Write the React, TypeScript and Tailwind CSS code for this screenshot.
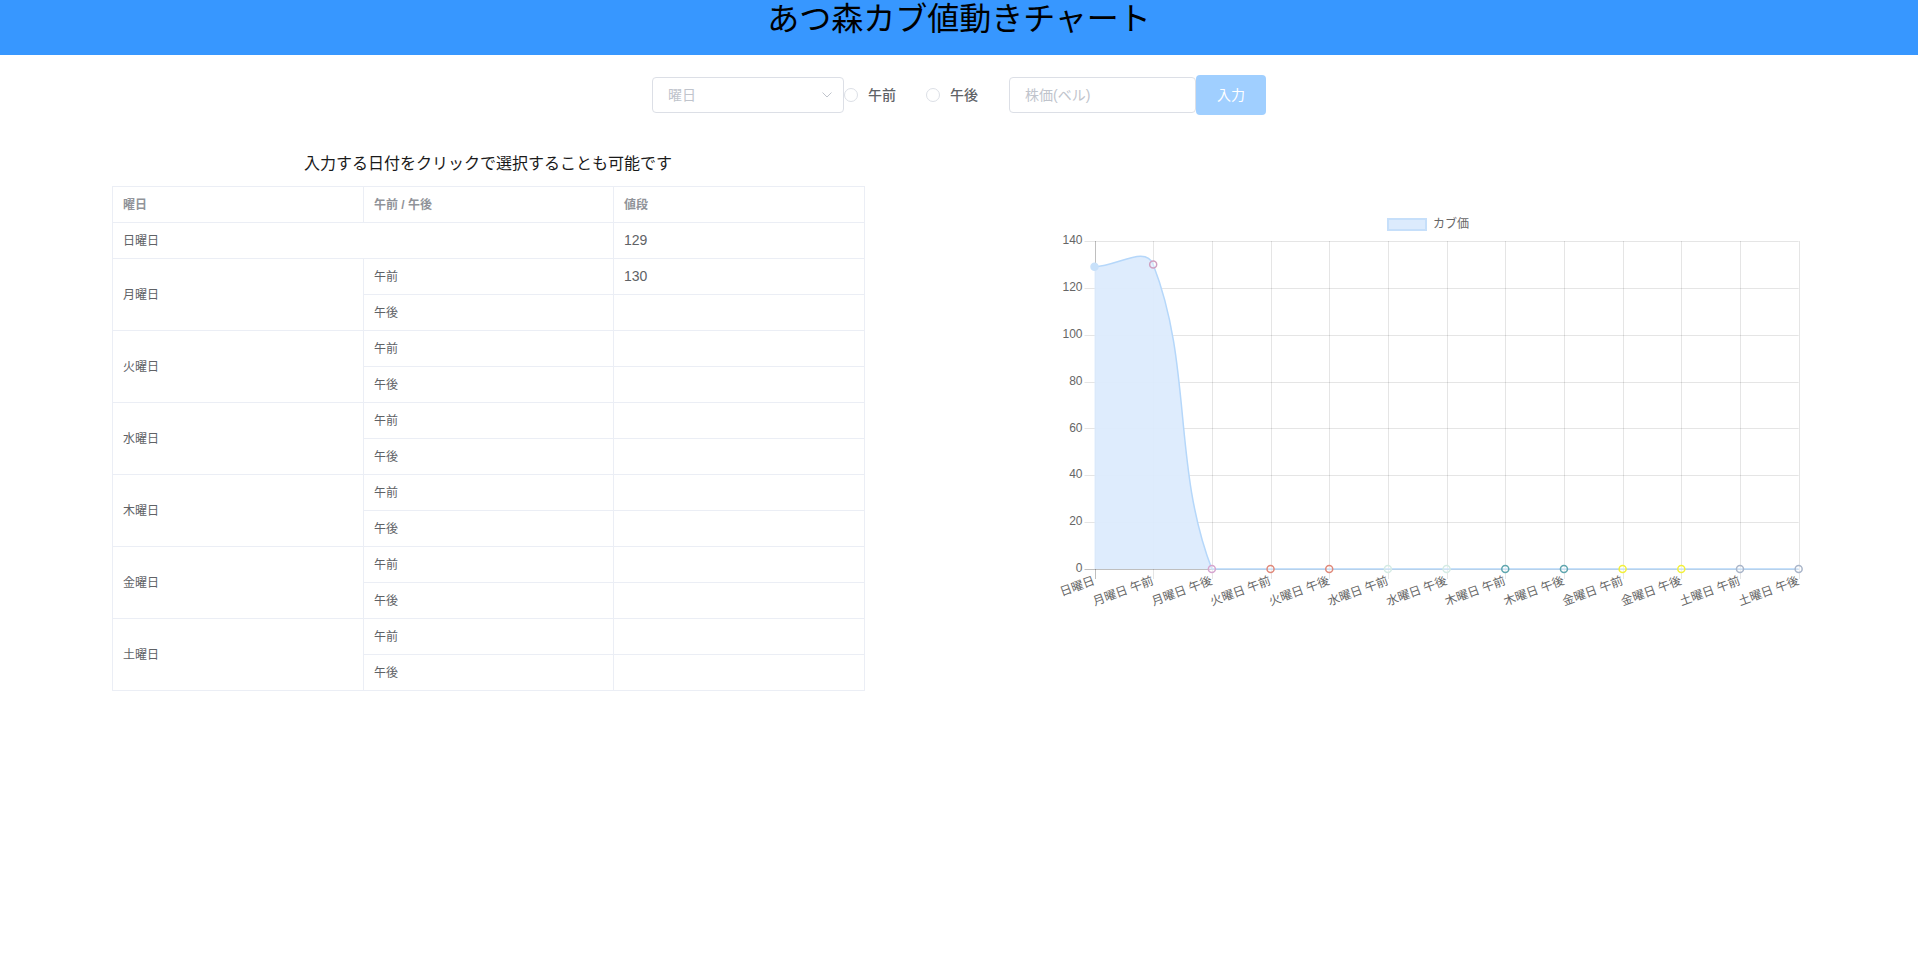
import React from "react";

const days = ["月曜日", "火曜日", "水曜日", "木曜日", "金曜日", "土曜日"];
const prices: Record<string, string> = { "月曜日-午前": "130" };

const labels = ["日曜日", ...days.flatMap((d) => [`${d} 午前`, `${d} 午後`])];
const values = [129, 130, 0, 0, 0, 0, 0, 0, 0, 0, 0, 0, 0];
const pointColors = [
  "#c8e1fa",
  "#cf9fc0",
  "#d6a5cf",
  "#e0897a",
  "#e0897a",
  "#d5ebe4",
  "#d5ebe4",
  "#5fa6ae",
  "#5fa6ae",
  "#f2f03c",
  "#f2f03c",
  "#a9b5c9",
  "#a9b5c9",
];

// chart area, in svg coords (svg sits at page x 1040, y 210)
const X0 = 54.5;
const DX = 58.68;
const YTOP = 31;
const YBOT = 359;
const px = (i: number) => X0 + i * DX;
const py = (v: number) => YBOT - (v / 140) * (YBOT - YTOP);

type Pt = { x: number; y: number };

// same spline as chart.js (tension 0.4)
function controlPoints(prev: Pt, cur: Pt, next: Pt, t: number) {
  const d01 = Math.hypot(cur.x - prev.x, cur.y - prev.y);
  const d12 = Math.hypot(next.x - cur.x, next.y - cur.y);
  let s01 = d01 / (d01 + d12);
  let s12 = d12 / (d01 + d12);
  s01 = isNaN(s01) ? 0 : s01;
  s12 = isNaN(s12) ? 0 : s12;
  const fa = t * s01;
  const fb = t * s12;
  return {
    prev: { x: cur.x - fa * (next.x - prev.x), y: cur.y - fa * (next.y - prev.y) },
    next: { x: cur.x + fb * (next.x - prev.x), y: cur.y + fb * (next.y - prev.y) },
  };
}

function buildPath() {
  const pts = values.map((v, i) => ({ x: px(i), y: py(v) }));
  const cps = pts.map((p, i) =>
    controlPoints(pts[i - 1] ?? p, p, pts[i + 1] ?? p, 0.4)
  );
  const clamp = (y: number) => Math.min(YBOT, Math.max(YTOP, y));
  let d = `M${pts[0].x},${pts[0].y}`;
  for (let i = 1; i < pts.length; i++) {
    const a = cps[i - 1].next;
    const b = cps[i].prev;
    d += ` C${a.x},${clamp(a.y)} ${b.x},${clamp(b.y)} ${pts[i].x},${pts[i].y}`;
  }
  const line = d;
  const area = `${d} L${pts[pts.length - 1].x},${YBOT} L${pts[0].x},${YBOT} Z`;
  return { line, area, pts };
}

const KabuChart: React.FC = () => {
  const { line, area, pts } = buildPath();
  const yTicks = [0, 20, 40, 60, 80, 100, 120, 140];
  const right = px(12);

  return (
    <svg width="780" height="410" className="block font-['Liberation_Sans','Noto_Sans_CJK_JP',sans-serif]">
      {/* legend */}
      <rect x="348" y="9" width="38" height="11" fill="#dcebfd" stroke="#c6dffa" strokeWidth="2" />
      <text x="393" y="15" fontSize="12" fill="#666" dominantBaseline="middle">
        カブ価
      </text>

      {/* horizontal grid */}
      {yTicks.map((t) => (
        <g key={t}>
          <line
            x1={X0 - 10}
            x2={right}
            y1={Math.round(py(t)) + 0.5}
            y2={Math.round(py(t)) + 0.5}
            stroke={t === 0 ? "rgba(0,0,0,0.25)" : "rgba(0,0,0,0.1)"}
            strokeWidth="1"
          />
          <text
            x={X0 - 12}
            y={py(t)}
            fontSize="12"
            fill="#666"
            textAnchor="end"
            dominantBaseline="middle"
          >
            {t}
          </text>
        </g>
      ))}

      {/* vertical grid + x labels */}
      {labels.map((l, i) => (
        <g key={l}>
          <line
            x1={Math.round(px(i)) + 0.5}
            x2={Math.round(px(i)) + 0.5}
            y1={YTOP}
            y2={YBOT + 10}
            stroke={i === 0 ? "rgba(0,0,0,0.25)" : "rgba(0,0,0,0.1)"}
            strokeWidth="1"
          />
          <text
            transform={`translate(${px(i)},${YBOT + 12}) rotate(-20)`}
            fontSize="12"
            fill="#666"
            textAnchor="end"
            dominantBaseline="middle"
          >
            {l}
          </text>
        </g>
      ))}

      {/* data */}
      <path d={area} fill="#dcebfd" opacity="0.95" />
      <path d={line} fill="none" stroke="#b5d7fa" strokeWidth="1.5" />
      {pts.map((p, i) => (
        <circle
          key={i}
          cx={p.x}
          cy={p.y}
          r="3.5"
          fill={i === 0 ? "#c8e1fa" : "rgba(255,255,255,0.35)"}
          stroke={pointColors[i]}
          strokeWidth="1.5"
        />
      ))}
    </svg>
  );
};

const Radio: React.FC<{ label: string; className?: string }> = ({ label, className }) => (
  <label className={`flex items-center cursor-pointer ${className ?? ""}`}>
    <span className="w-[14px] h-[14px] rounded-full border border-[#dcdfe6] bg-white" />
    <span className="pl-[10px] text-[14px] font-medium text-[#606266] leading-none">{label}</span>
  </label>
);

const cell = "border border-[#ebeef5] h-[36px] px-[10px] py-0 align-middle";

export default function App() {
  return (
    <div className="min-h-screen bg-white font-['Liberation_Sans','Noto_Sans_CJK_JP',sans-serif]">
      <header className="h-[55px] bg-[#3797ff]">
        <h1 className="m-0 text-center text-[32px] leading-[32px] font-normal text-black font-['Noto_Sans_CJK_JP',sans-serif]">
          あつ森カブ値動きチャート
        </h1>
      </header>

      <div className="mt-[20px] h-[40px] flex items-center justify-center">
        <div className="w-[192px] h-[36px] border border-[#dcdfe6] rounded-[4px] flex items-center justify-between pl-[15px] pr-[11px] bg-white">
          <span className="text-[14px] text-[#c0c4cc]">曜日</span>
          <svg width="10" height="6" viewBox="0 0 10 6">
            <path d="M0.5 0.5 L5 5 L9.5 0.5" fill="none" stroke="#c0c4cc" strokeWidth="1" />
          </svg>
        </div>
        <Radio label="午前" className="mr-[30px]" />
        <Radio label="午後" className="mr-[31px]" />
        <input
          className="w-[187px] h-[36px] border border-[#dcdfe6] rounded-[4px] px-[15px] text-[14px] text-[#606266] placeholder:text-[#c0c4cc] outline-none"
          placeholder="株価(ベル)"
        />
        <button className="w-[70px] h-[40px] bg-[#a0cfff] rounded-[4px] text-white text-[14px] cursor-not-allowed">
          入力
        </button>
      </div>

      <div className="flex items-start mt-[37px]">
        <div className="ml-[112px] w-[752px]">
          <p className="text-center text-[16px] leading-[24px] text-[#1a1a1a]">
            入力する日付をクリックで選択することも可能です
          </p>
          <table className="mt-[10px] w-[752px] table-fixed border-collapse text-[12px] text-[#606266]">
            <colgroup>
              <col className="w-[251px]" />
              <col className="w-[250px]" />
              <col className="w-[251px]" />
            </colgroup>
            <thead>
              <tr className="text-left text-[#909399] font-bold">
                <th className={`${cell} font-bold`}>曜日</th>
                <th className={`${cell} font-bold`}>午前 / 午後</th>
                <th className={`${cell} font-bold`}>値段</th>
              </tr>
            </thead>
            <tbody>
              <tr>
                <td className={cell} colSpan={2}>
                  日曜日
                </td>
                <td className={`${cell} text-[14px]`}>129</td>
              </tr>
              {days.map((d) => (
                <React.Fragment key={d}>
                  <tr>
                    <td className={cell} rowSpan={2}>
                      {d}
                    </td>
                    <td className={cell}>午前</td>
                    <td className={`${cell} text-[14px]`}>{prices[`${d}-午前`] ?? ""}</td>
                  </tr>
                  <tr>
                    <td className={cell}>午後</td>
                    <td className={`${cell} text-[14px]`}>{prices[`${d}-午後`] ?? ""}</td>
                  </tr>
                </React.Fragment>
              ))}
            </tbody>
          </table>
        </div>
        <div className="ml-[176px] mt-[58px]">
          <KabuChart />
        </div>
      </div>
    </div>
  );
}
